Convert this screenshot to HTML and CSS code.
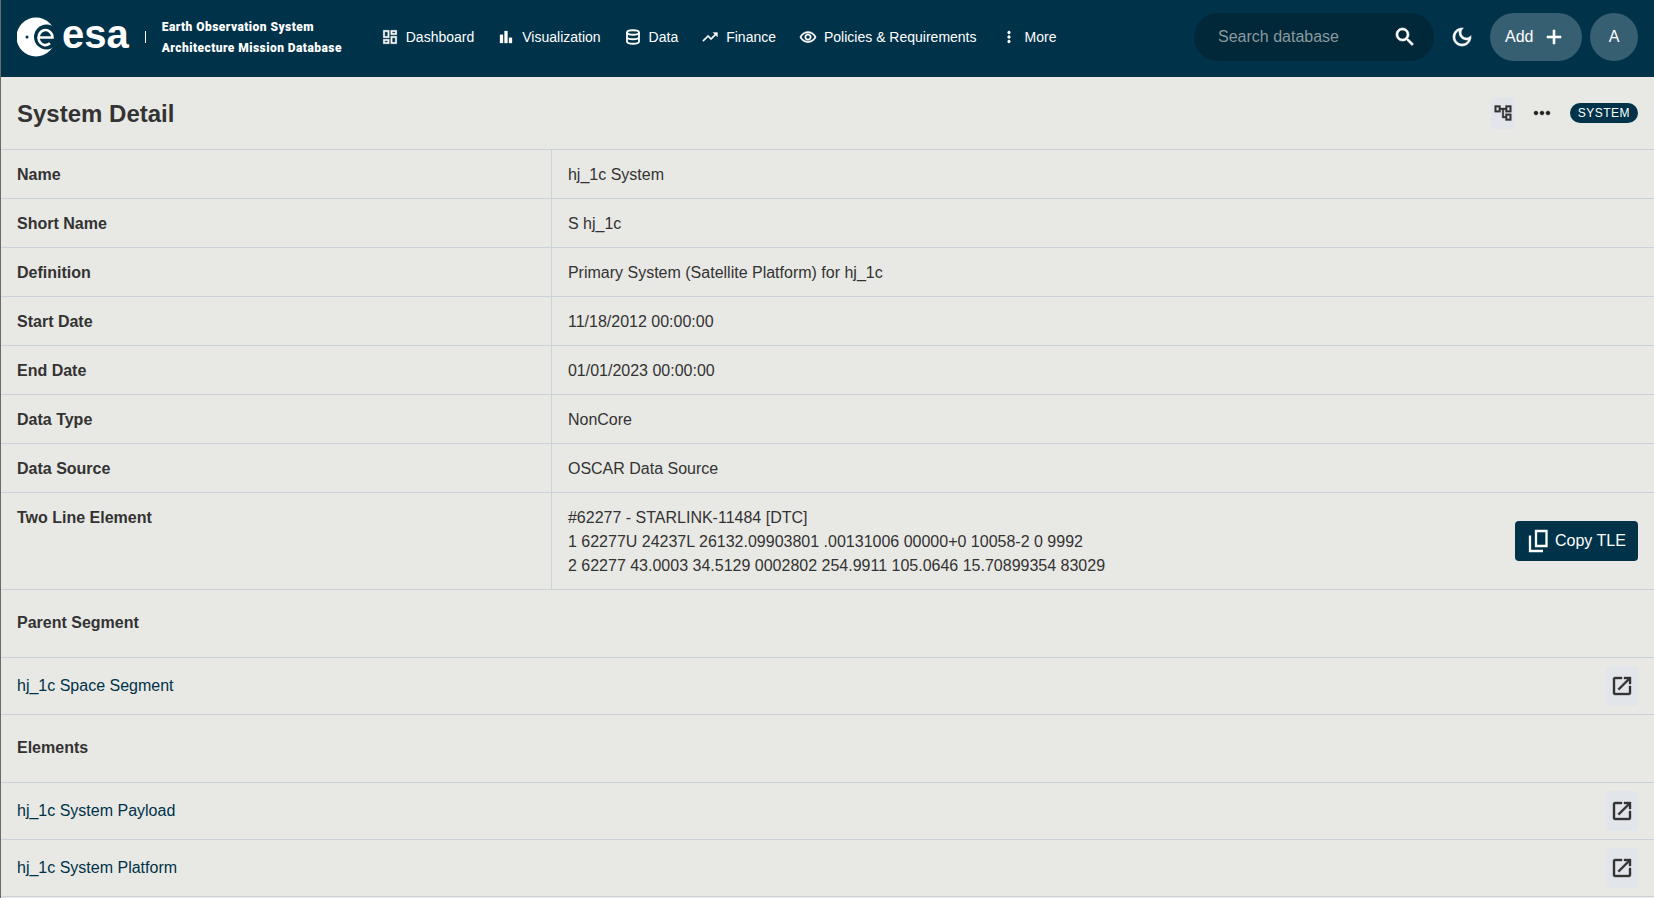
FILE: index.html
```html
<!DOCTYPE html>
<html lang="en">
<head>
  <meta charset="UTF-8">
  <title>System Detail</title>
  <link rel="stylesheet" href="styles.css">
</head>
<body>

<div class="header">
  <div class="brand">
    <svg class="brand-mark" viewBox="0 0 40 40">
      <circle cx="19" cy="20" r="19.500" fill="#fff"/>
      <circle cx="29.500" cy="20" r="12.500" fill="#003249"/>
      <circle cx="10" cy="20" r="1.500" fill="#003249"/>
      <path d="M22 20.500h13.500a7 7.500 0 1 0-2.500 5.800" fill="none" stroke="#fff" stroke-width="2.600"/>
    </svg>
    <span class="brand-word">esa</span>
    <span class="brand-sep"></span>
    <div class="brand-title">Earth Observation System<br>Architecture Mission Database</div>
  </div>

  <nav class="nav">
    <a href="#"><svg viewBox="0 0 24 24"><path d="M19 5v2h-4V5h4M9 5v6H5V5h4m10 8v6h-4v-6h4M9 17v2H5v-2h4M21 3h-8v6h8V3zM11 3H3v10h8V3zm10 8h-8v10h8V11zm-10 4H3v6h8v-6z"/></svg>Dashboard</a>
    <a href="#"><svg viewBox="0 0 24 24"><path d="M4 9h4v11H4zm12 4h4v7h-4zm-6-9h4v16h-4z"/></svg>Visualization</a>
    <a href="#"><svg viewBox="0 0 24 24"><g fill="none" stroke-width="2.400"><ellipse cx="12" cy="6" rx="8" ry="3"/><path d="M4 6v12c0 1.700 3.600 3 8 3s8-1.300 8-3V6M4 12c0 1.700 3.600 3 8 3s8-1.300 8-3"/></g></svg>Data</a>
    <a href="#"><svg viewBox="0 0 24 24"><path d="M16 6l2.290 2.290-4.880 4.880-4-4L2 16.590 3.410 18l6-6 4 4 6.300-6.290L22 12V6z"/></svg>Finance</a>
    <a href="#"><svg viewBox="0 0 24 24"><path d="M12 6.500c3.790 0 7.170 2.130 8.820 5.500-1.650 3.370-5.020 5.500-8.820 5.500S4.830 15.370 3.180 12C4.830 8.630 8.210 6.500 12 6.500m0-2C7 4.500 2.730 7.610 1 12c1.730 4.390 6 7.500 11 7.500s9.270-3.110 11-7.500c-1.730-4.390-6-7.500-11-7.500zm0 5c1.380 0 2.500 1.120 2.500 2.500s-1.120 2.500-2.500 2.500-2.500-1.120-2.500-2.500 1.120-2.500 2.500-2.500m0-2c-2.480 0-4.500 2.020-4.500 4.500s2.020 4.500 4.500 4.500 4.500-2.020 4.500-4.500-2.020-4.500-4.500-4.500z"/></svg>Policies &amp; Requirements</a>
    <a href="#"><svg viewBox="0 0 24 24"><path d="M12 8c1.100 0 2-.9 2-2s-.9-2-2-2-2 .9-2 2 .9 2 2 2zm0 2c-1.100 0-2 .9-2 2s.9 2 2 2 2-.9 2-2-.9-2-2-2zm0 6c-1.100 0-2 .9-2 2s.9 2 2 2 2-.9 2-2-.9-2-2-2z"/></svg>More</a>
  </nav>

  <div class="header-right">
    <div class="search">
      <span class="search-text">Search database</span>
      <svg viewBox="0 0 24 24"><path d="M15.500 14h-.79l-.28-.27C15.410 12.590 16 11.110 16 9.500 16 5.910 13.090 3 9.500 3S3 5.910 3 9.500 5.910 16 9.500 16c1.610 0 3.090-.59 4.230-1.570l.27.28v.79l5 4.990L20.490 19l-4.990-5zm-6 0C7.010 14 5 11.990 5 9.500S7.010 5 9.500 5 14 7.010 14 9.500 11.990 14 9.500 14z"/></svg>
    </div>
    <div class="theme-btn">
      <svg viewBox="0 0 24 24"><path d="M9.370 5.510c-.18.64-.27 1.310-.27 1.990 0 4.080 3.320 7.400 7.400 7.400.68 0 1.350-.09 1.990-.27C17.450 17.190 14.930 19 12 19c-3.860 0-7-3.140-7-7 0-2.930 1.810-5.450 4.370-6.490zM12 3c-4.970 0-9 4.030-9 9s4.030 9 9 9 9-4.030 9-9c0-.46-.04-.92-.1-1.360-.98 1.370-2.580 2.260-4.400 2.260-2.980 0-5.400-2.420-5.400-5.400 0-1.810.89-3.420 2.260-4.400-.44-.06-.9-.1-1.360-.1z"/></svg>
    </div>
    <div class="add-btn">Add
      <svg viewBox="0 0 24 24"><path d="M19 13h-6v6h-2v-6H5v-2h6V5h2v6h6v2z"/></svg>
    </div>
    <div class="avatar">A</div>
  </div>
</div>

<div class="title-row">
  <h1>System Detail</h1>
  <div class="title-actions">
    <span class="icon-btn small"><svg viewBox="0 0 24 24"><path d="M22 11V3h-7v3H9V3H2v8h7V8h2v10h4v3h7v-8h-7v3h-2V8h2v3h7zM7 9H4V5h3v4zm10 6h3v4h-3v-4zm0-10h3v4h-3V5z"/></svg></span>
    <svg class="dots" viewBox="0 0 24 24"><path d="M6 10c-1.100 0-2 .9-2 2s.9 2 2 2 2-.9 2-2-.9-2-2-2zm12 0c-1.100 0-2 .9-2 2s.9 2 2 2 2-.9 2-2-.9-2-2-2zm-6 0c-1.100 0-2 .9-2 2s.9 2 2 2 2-.9 2-2-.9-2-2-2z"/></svg>
    <span class="badge">SYSTEM</span>
  </div>
</div>

<table class="detail">
  <tr><th>Name</th><td>hj_1c System</td></tr>
  <tr><th>Short Name</th><td>S hj_1c</td></tr>
  <tr><th>Definition</th><td>Primary System (Satellite Platform) for hj_1c</td></tr>
  <tr><th>Start Date</th><td>11/18/2012 00:00:00</td></tr>
  <tr><th>End Date</th><td>01/01/2023 00:00:00</td></tr>
  <tr><th>Data Type</th><td>NonCore</td></tr>
  <tr><th>Data Source</th><td>OSCAR Data Source</td></tr>
  <tr>
    <th>Two Line Element</th>
    <td>
      <div class="tle">
        <div>#62277 - STARLINK-11484 [DTC]<br>1 62277U 24237L 26132.09903801 .00131006 00000+0 10058-2 0 9992<br>2 62277 43.0003 34.5129 0002802 254.9911 105.0646 15.70899354 83029</div>
        <button class="copy-btn">
          <svg viewBox="0 0 24 24"><path d="M10 2h10.500v15H10zM4 6.500V22h13" fill="none" stroke="currentColor" stroke-width="2.300"/></svg>
          Copy TLE
        </button>
      </div>
    </td>
  </tr>
</table>

<div class="section-title">Parent Segment</div>
<div class="link-row">
  <a href="#">hj_1c Space Segment</a>
  <span class="icon-btn"><svg viewBox="0 0 24 24"><path d="M19 19H5V5h7V3H5c-1.110 0-2 .9-2 2v14c0 1.100.89 2 2 2h14c1.100 0 2-.9 2-2v-7h-2v7zM14 3v2h3.590l-9.830 9.830 1.410 1.410L19 6.410V10h2V3h-7z"/></svg></span>
</div>

<div class="section-title">Elements</div>
<div class="link-row">
  <a href="#">hj_1c System Payload</a>
  <span class="icon-btn"><svg viewBox="0 0 24 24"><path d="M19 19H5V5h7V3H5c-1.110 0-2 .9-2 2v14c0 1.100.89 2 2 2h14c1.100 0 2-.9 2-2v-7h-2v7zM14 3v2h3.590l-9.830 9.830 1.410 1.410L19 6.410V10h2V3h-7z"/></svg></span>
</div>
<div class="link-row">
  <a href="#">hj_1c System Platform</a>
  <span class="icon-btn"><svg viewBox="0 0 24 24"><path d="M19 19H5V5h7V3H5c-1.110 0-2 .9-2 2v14c0 1.100.89 2 2 2h14c1.100 0 2-.9 2-2v-7h-2v7zM14 3v2h3.590l-9.830 9.830 1.410 1.410L19 6.410V10h2V3h-7z"/></svg></span>
</div>

</body>
</html>
```

FILE: styles.css
```css
:root {
  --primary: #003249;
  --background: #e8e8e4;
  --line: #ccd2da;
  --text: #333333;
  --hover: #e2e5ea;
}

html {
  overflow: hidden;
}

body {
  margin: 0;
  height: 898px;
  box-sizing: border-box;
  border-left: 1px solid #6b6b6b;
  background: var(--background);
  color: var(--text);
  font-family: "Liberation Sans", Arial, sans-serif;
  font-size: 16px;
  line-height: 24px;
}

svg {
  display: block;
  fill: currentColor;
  stroke: currentColor;
  stroke-width: 0.4;
  flex: none;
}

.header {
  height: 77px;
  box-sizing: border-box;
  background: var(--primary);
  color: #fff;
  display: flex;
  align-items: center;
  padding: 0 16px 3px;
}

.brand {
  display: flex;
  align-items: center;
}

.brand-mark {
  width: 40px;
  height: 40px;
  stroke: none;
}

.brand-word {
  font-size: 40px;
  font-weight: 700;
  line-height: 40px;
  margin: -6px 0 0 5px;
}

.brand-sep {
  width: 1px;
  height: 12px;
  background: #fff;
  margin: 0 16px 0 16px;
}

.brand-title {
  font-family: Roboto, sans-serif;
  font-size: 12px;
  font-weight: 900;
  line-height: 21px;
  width: 190px;
  margin-top: 2px;
  letter-spacing: 0.45px;
}

.nav {
  display: flex;
  gap: 23px;
  margin-left: 29px;
}

.nav a {
  display: flex;
  align-items: center;
  gap: 7px;
  color: #fff;
  font-size: 14px;
  text-decoration: none;
  white-space: nowrap;
}

.nav svg {
  width: 18px;
  height: 18px;
}

.header-right {
  display: flex;
  align-items: center;
  margin-left: auto;
}

.search {
  width: 240px;
  height: 48px;
  box-sizing: border-box;
  padding: 0 17px 0 24px;
  border-radius: 24px;
  background: #002838;
  display: flex;
  align-items: center;
  justify-content: space-between;
}

.search-text {
  color: #8a999f;
}

.search svg,
.theme-btn svg,
.add-btn svg {
  width: 24px;
  height: 24px;
  stroke-width: 0.6;
}

.theme-btn {
  width: 56px;
  display: flex;
  justify-content: center;
}

.add-btn {
  width: 92px;
  height: 48px;
  box-sizing: border-box;
  padding-left: 15px;
  gap: 9px;
  border-radius: 24px;
  background: #365f72;
  display: flex;
  align-items: center;
}

.avatar {
  width: 48px;
  height: 48px;
  margin-left: 8px;
  border-radius: 50%;
  background: #365f72;
  display: flex;
  align-items: center;
  justify-content: center;
}

.title-row {
  height: 72px;
  padding: 0 16px;
  border-bottom: 1px solid var(--line);
  display: flex;
  align-items: center;
  justify-content: space-between;
}

.title-row h1 {
  margin: 2px 0 0;
  font-size: 24px;
  line-height: 32px;
  font-weight: 700;
}

.title-actions {
  display: flex;
  align-items: center;
}

.dots {
  width: 24px;
  height: 24px;
  margin: 0 16px 0 15px;
  color: #1f1f1f;
}

.badge {
  height: 20px;
  padding: 0 8px;
  border-radius: 10px;
  background: var(--primary);
  color: #fff;
  font-size: 12px;
  line-height: 20px;
  letter-spacing: 0.5px;
}

.detail {
  width: 100%;
  table-layout: fixed;
  border-collapse: separate;
  border-spacing: 0;
}

.detail th,
.detail td {
  padding: 13px 16px 11px;
  border-bottom: 1px solid var(--line);
  text-align: left;
  vertical-align: top;
}

.detail th {
  width: 33.33%;
  box-sizing: border-box;
  border-right: 1px solid var(--line);
}

.tle {
  display: flex;
  align-items: center;
  justify-content: space-between;
}

.copy-btn {
  height: 40px;
  width: 123px;
  margin-top: -2px;
  padding: 0 0 0 11px;
  border: none;
  border-radius: 4px;
  background: var(--primary);
  color: #fff;
  font: inherit;
  display: flex;
  align-items: center;
  gap: 5px;
}

.copy-btn svg {
  width: 24px;
  height: 24px;
}

.section-title {
  padding: 21px 16px 22px;
  border-bottom: 1px solid var(--line);
  font-weight: 700;
}

.link-row {
  height: 40px;
  padding: 8px 16px;
  border-bottom: 1px solid var(--line);
  display: flex;
  align-items: center;
  justify-content: space-between;
}

.link-row a {
  color: var(--primary);
  text-decoration: none;
}

.icon-btn {
  width: 32px;
  height: 40px;
  background: var(--hover);
  color: #333;
  border-radius: 4px;
  display: flex;
  align-items: center;
  justify-content: center;
}

.icon-btn svg {
  width: 24px;
  height: 24px;
}

.icon-btn.small {
  width: 24px;
  height: 32px;
}

.icon-btn.small svg {
  width: 20px;
  height: 20px;
}
```
